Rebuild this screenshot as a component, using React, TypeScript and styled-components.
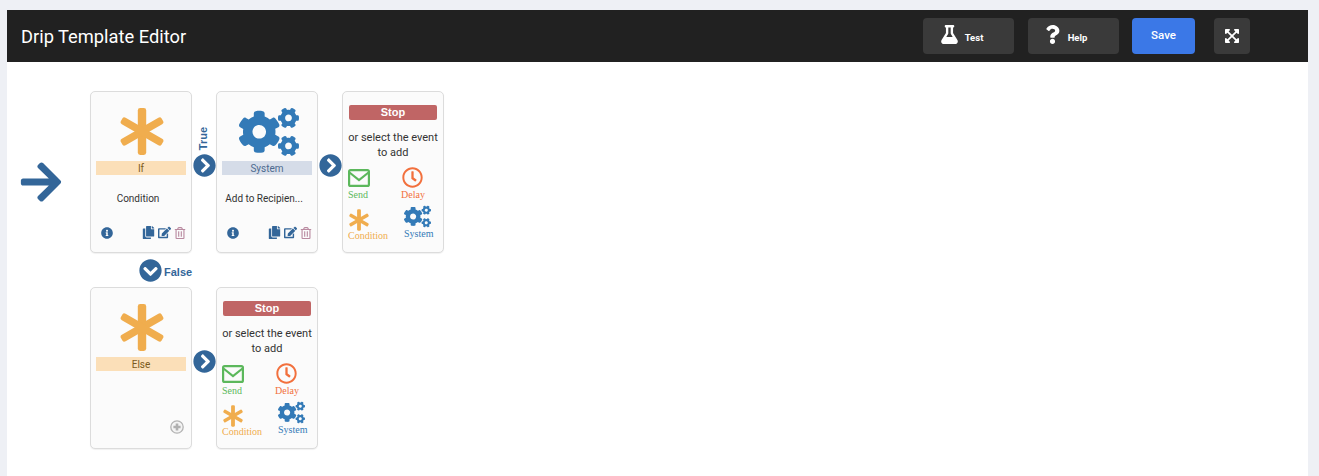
import React from 'react';
import styled, { createGlobalStyle } from 'styled-components';
import {
    FaArrowRight,
    FaChevronCircleDown,
    FaChevronCircleRight,
    FaCogs,
    FaCopy,
    FaEdit,
    FaExpandArrowsAlt,
    FaFlask,
    FaInfoCircle,
    FaQuestion,
    FaRegClock,
    FaRegTrashAlt,
} from 'react-icons/fa';

const BLUE = '#336699';
const ORANGE = '#f0ad4e';

const GlobalStyle = createGlobalStyle`
    html, body {
        margin: 0;
        height: 100%;
        overflow: hidden;
        background: #eef0f5;
        font-family: "Roboto", "Liberation Sans", sans-serif;
    }
`;

const Page = styled.div`
    height: 100vh;
    padding: 10px 11px 0 7px;
    box-sizing: border-box;
`;

const Panel = styled.div`
    height: 100%;
    background: #fff;
    display: flex;
    flex-direction: column;
`;

const Header = styled.header`
    height: 52px;
    background: #212121;
    display: flex;
    align-items: center;
    padding: 0 58px 0 14px;
    flex-shrink: 0;
`;

const Title = styled.h1`
    margin: 0 auto 0 0;
    font-size: 18.3px;
    font-weight: 400;
    color: #fff;
`;

const Actions = styled.div`
    display: flex;
`;

const ToolButton = styled.button<{ $w: number; $mr: number; $blue?: boolean; $pr?: number }>`
    width: ${({ $w }) => $w}px;
    height: 36px;
    margin-right: ${({ $mr }) => $mr}px;
    padding: 0 ${({ $pr }) => $pr ?? 0}px 0 0;
    border: 0;
    border-radius: 4px;
    background: ${({ $blue }) => ($blue ? '#3b78e7' : '#3a3a3a')};
    color: #fff;
    font-family: inherit;
    display: flex;
    align-items: center;
    justify-content: center;
    gap: 6px;
`;

const ToolIcon = styled.span`
    display: flex;
    margin-top: -3px;
`;

const ToolLabel = styled.span`
    font-size: 9.5px;
    font-weight: 700;
    margin-top: 2px;
`;

const SaveLabel = styled.span`
    font-size: 11.5px;
    font-weight: 500;
    margin-top: -2px;
`;

const Canvas = styled.div`
    display: flex;
    padding-top: 29px;
`;

const StartColumn = styled.div`
    width: 83px;
    padding: 68px 0 0 11px;
    box-sizing: border-box;
    color: ${BLUE};
    flex-shrink: 0;
`;

const Flow = styled.div`
    display: flex;
    flex-direction: column;
`;

const Row = styled.div`
    display: flex;
`;

const Card = styled.div`
    width: 102px;
    height: 162px;
    box-sizing: border-box;
    background: #fbfbfb;
    border: 1px solid #dcdcdc;
    border-radius: 5px;
    box-shadow: 0 1px 1px rgba(0, 0, 0, 0.06);
    display: flex;
    flex-direction: column;
    align-items: center;
    flex-shrink: 0;
`;

const HeroIcon = styled.div`
    height: 69px;
    padding: 16px 0 0 2px;
    box-sizing: border-box;
    display: flex;
    justify-content: center;
`;

const CogsHero = styled(FaCogs)`
    margin: -6px 0 0 2px;
    color: #337ab7;
`;

const Band = styled.div<{ $bg: string; $fg: string }>`
    width: 90px;
    height: 14px;
    line-height: 15px;
    text-align: center;
    font-size: 10px;
    background: ${({ $bg }) => $bg};
    color: ${({ $fg }) => $fg};
`;

const CardText = styled.div`
    margin: 17px 6px 0 0;
    font-size: 10px;
    line-height: 14px;
    color: #333;
    text-align: center;
    white-space: nowrap;
`;

const CardFooter = styled.div`
    margin-top: auto;
    width: 100%;
    box-sizing: border-box;
    padding: 0 5px 13px 10px;
    display: flex;
    align-items: center;
    color: ${BLUE};
`;

const FooterTools = styled.div`
    margin-left: auto;
    display: flex;
    align-items: center;
    gap: 3px;
`;

const AddFooter = styled.div`
    margin-top: auto;
    align-self: flex-end;
    padding: 0 7px 14px 0;
    display: flex;
`;

const Connector = styled.div`
    width: 24px;
    height: 162px;
    padding-bottom: 76px;
    box-sizing: border-box;
    display: flex;
    flex-direction: column;
    align-items: center;
    justify-content: flex-end;
    color: ${BLUE};
    flex-shrink: 0;
`;

const TrueLabel = styled.span`
    writing-mode: vertical-rl;
    transform: rotate(180deg);
    font-family: "Liberation Sans", sans-serif;
    font-size: 11px;
    font-weight: 700;
    margin: 0 2px 4px 0;
`;

const FalseRow = styled.div`
    height: 34px;
    padding: 6px 0 0 49px;
    box-sizing: border-box;
    display: flex;
    align-items: flex-start;
    gap: 2px;
    color: ${BLUE};
`;

const FalseLabel = styled.span`
    font-family: "Liberation Sans", sans-serif;
    font-size: 11px;
    font-weight: 700;
    margin-top: 7px;
`;

const StopCard = styled(Card)`
    padding: 13px 6px 0;
    align-items: stretch;
`;

const StopBar = styled.div`
    height: 15px;
    line-height: 15px;
    background: #c06565;
    border-radius: 2px;
    color: #fff;
    font-family: "Liberation Sans", sans-serif;
    font-size: 11px;
    font-weight: 700;
    text-align: center;
`;

const Prompt = styled.div`
    margin: 10px -2px 0 -2px;
    font-size: 11px;
    line-height: 15px;
    color: #333;
    text-align: center;
`;

const EventGrid = styled.div`
    margin: 3px 0 0 -1px;
    display: grid;
    grid-template-columns: 53px 1fr;
    grid-template-rows: 38px 41px;
`;

const EventItem = styled.div<{ $color: string; $indent?: number; $lift?: number }>`
    display: flex;
    flex-direction: column;
    align-items: flex-start;
    justify-content: flex-end;
    padding: 0 0 ${({ $lift }) => $lift ?? 0}px ${({ $indent }) => $indent ?? 0}px;
    color: ${({ $color }) => $color};
    font-family: "Liberation Serif", serif;
    font-size: 10px;
    line-height: 12px;
`;

const EventIcon = styled.div<{ $ml?: number; $nudge?: number }>`
    height: 24px;
    margin: ${({ $nudge }) => $nudge ?? 0}px 0 ${({ $nudge }) => -($nudge ?? 0)}px ${({ $ml }) => $ml ?? 0}px;
    display: flex;
    align-items: center;
`;

const Asterisk = ({ width, height }: { width: number; height: number }) => (
    <svg width={width} height={height} viewBox="0 0 44 47" fill={ORANGE}>
        <rect x="17.8" y="0" width="8.4" height="47" rx="2.4" />
        <rect x="18.2" y="0" width="7.6" height="47" rx="2.4" transform="rotate(60 22 23.5)" />
        <rect x="18.2" y="0" width="7.6" height="47" rx="2.4" transform="rotate(120 22 23.5)" />
    </svg>
);

const Envelope = () => (
    <svg width="22" height="18" viewBox="0 0 22 18" fill="none" stroke="#5cb85c" strokeWidth="2.2">
        <rect x="1.1" y="1.1" width="19.8" height="15.8" rx="1.5" />
        <path d="M1.5 3.5 L11 11 L20.5 3.5" />
    </svg>
);

const PlusBadge = () => (
    <svg width="14" height="14" viewBox="0 0 14 14">
        <circle cx="7" cy="7" r="6.2" fill="#f4f4f4" stroke="#b3b3b3" strokeWidth="1.3" />
        <path d="M7 3.4 V10.6 M3.4 7 H10.6" stroke="#b0b0b0" strokeWidth="2.6" />
    </svg>
);

const StopPanel = () => (
    <StopCard>
        <StopBar>Stop</StopBar>
        <Prompt>
            or select the event
            <br />
            to add
        </Prompt>
        <EventGrid>
            <EventItem $color="#5cb85c">
                <EventIcon $nudge={1}>
                    <Envelope />
                </EventIcon>
                Send
            </EventItem>
            <EventItem $color="#f2703d">
                <EventIcon $ml={1}>
                    <FaRegClock size={21} />
                </EventIcon>
                Delay
            </EventItem>
            <EventItem $color={ORANGE}>
                <EventIcon $ml={1} $nudge={2}>
                    <Asterisk width={20} height={22} />
                </EventIcon>
                Condition
            </EventItem>
            <EventItem $color="#337ab7" $indent={3} $lift={2}>
                <EventIcon>
                    <FaCogs size={27} />
                </EventIcon>
                System
            </EventItem>
        </EventGrid>
    </StopCard>
);

const CardTools = () => (
    <CardFooter>
        <FaInfoCircle size={12} />
        <FooterTools>
            <FaCopy size={13} />
            <FaEdit size={13} />
            <FaRegTrashAlt size={12} color="#b98aa0" />
        </FooterTools>
    </CardFooter>
);

function App() {
    return (
        <Page>
            <GlobalStyle />
            <Panel>
                <Header>
                    <Title>Drip Template Editor</Title>
                    <Actions>
                        <ToolButton $w={91} $mr={14} $pr={14}>
                            <ToolIcon>
                                <FaFlask size={19} />
                            </ToolIcon>
                            <ToolLabel>Test</ToolLabel>
                        </ToolButton>
                        <ToolButton $w={91} $mr={13} $pr={17}>
                            <ToolIcon>
                                <FaQuestion size={19} />
                            </ToolIcon>
                            <ToolLabel>Help</ToolLabel>
                        </ToolButton>
                        <ToolButton $w={63} $mr={19} $blue>
                            <SaveLabel>Save</SaveLabel>
                        </ToolButton>
                        <ToolButton $w={36} $mr={0}>
                            <FaExpandArrowsAlt size={16} />
                        </ToolButton>
                    </Actions>
                </Header>
                <Canvas>
                    <StartColumn>
                        <FaArrowRight size={46} />
                    </StartColumn>
                    <Flow>
                        <Row>
                            <Card>
                                <HeroIcon>
                                    <Asterisk width={44} height={47} />
                                </HeroIcon>
                                <Band $bg="#fbdfb8" $fg="#7a5a20">If</Band>
                                <CardText>Condition</CardText>
                                <CardTools />
                            </Card>
                            <Connector>
                                <TrueLabel>True</TrueLabel>
                                <FaChevronCircleRight size={23} />
                            </Connector>
                            <Card>
                                <HeroIcon>
                                    <CogsHero size={60} />
                                </HeroIcon>
                                <Band $bg="#d5dce8" $fg="#4d6a8f">System</Band>
                                <CardText>Add to Recipien...</CardText>
                                <CardTools />
                            </Card>
                            <Connector>
                                <FaChevronCircleRight size={23} />
                            </Connector>
                            <StopPanel />
                        </Row>
                        <FalseRow>
                            <FaChevronCircleDown size={23} />
                            <FalseLabel>False</FalseLabel>
                        </FalseRow>
                        <Row>
                            <Card>
                                <HeroIcon>
                                    <Asterisk width={44} height={47} />
                                </HeroIcon>
                                <Band $bg="#fbdfb8" $fg="#7a5a20">Else</Band>
                                <AddFooter>
                                    <PlusBadge />
                                </AddFooter>
                            </Card>
                            <Connector>
                                <FaChevronCircleRight size={23} />
                            </Connector>
                            <StopPanel />
                        </Row>
                    </Flow>
                </Canvas>
            </Panel>
        </Page>
    );
}

export default App;
